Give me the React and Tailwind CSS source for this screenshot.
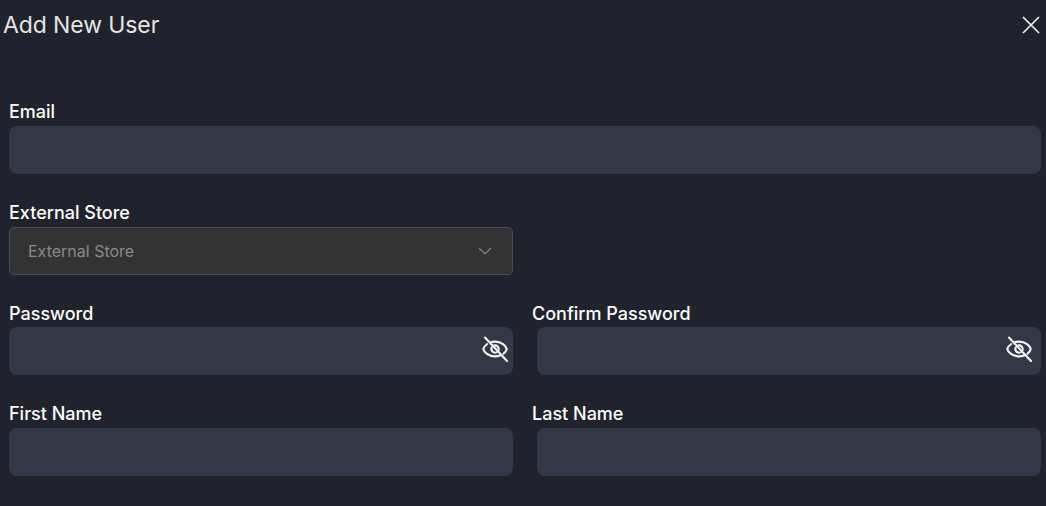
import React from 'react';

const EyeOff = () => (
  <svg width="28" height="28" viewBox="0 0 28 28" fill="none" stroke="#f5f5f5" strokeWidth="2.100" strokeLinecap="round" strokeLinejoin="round">
    <path d="M6.200 9C4 10.600 2.600 12.600 2.300 14c.6 3.200 5.300 7.400 11.700 7.400 2 0 3.800-.4 5.400-1.100" />
    <path d="M9.600 7.300C11 6.800 12.400 6.600 14 6.600c6.400 0 11.100 4.200 11.700 7.400-.3 1.500-1.400 3.200-3.200 4.800" />
    <path d="M10.700 12.500a3.700 3.700 0 0 0 4.800 4.900" />
    <path d="M13.400 10.400a3.700 3.700 0 0 1 4.300 4.300" />
    <path d="M4 2.500 26 26" />
  </svg>
);

const Field = ({ label, labelClass = 'leading-[26px]', children }) => (
  <div className="flex flex-col min-w-0">
    <label className={`h-6 text-[18px] font-medium text-white mb-[3px] whitespace-nowrap ${labelClass}`}>{label}</label>
    {children}
  </div>
);

const TextInput = ({ eyeClass }) => (
  <div className="relative h-12">
    <input className="w-full h-12 rounded-lg bg-[#323846] outline-none px-5 text-white" />
    {eyeClass && (
      <span className={`absolute top-2 flex ${eyeClass}`}>
        <EyeOff />
      </span>
    )}
  </div>
);

export default function App() {
  return (
    <div className="w-[1046px] h-[506px] overflow-hidden bg-[#20232b] font-['Inter',sans-serif]">
      <header className="h-[50px] flex items-center justify-between pl-[3px] pr-[5px]">
        <h2 className="text-[23px] text-[#e6e6e6] leading-[50px] tracking-[-0.1px]">Add New User</h2>
        <button className="flex">
          <svg width="20" height="20" viewBox="0 0 20 20" fill="none" stroke="#f2f2f2" strokeWidth="1.700">
            <path d="M2 2l16 16M18 2 2 18" />
          </svg>
        </button>
      </header>
      <form className="mt-[49px] ml-[9px] w-[1032px] grid grid-cols-2 gap-x-6 gap-y-[25.5px]">
        <div className="col-span-2">
          <Field label="Email"><TextInput /></Field>
        </div>
        <Field label="External Store">
          <div className="h-12 rounded-[5px] border border-[#4b4c4e] bg-[#333333] flex items-center justify-between pl-[18px] pr-5">
            <span className="text-[16px] text-[#8a8a8a]">External Store</span>
            <svg width="14" height="8" viewBox="0 0 14 8" fill="none" stroke="#8a8a8a" strokeWidth="1.100">
              <path d="M1 1l6 6 6-6" />
            </svg>
          </div>
        </Field>
        <div />
        <Field label="Password" labelClass="leading-[28px]"><TextInput eyeClass="right-[4px]" /></Field>
        <Field label="Confirm Password" labelClass="leading-[28px] -ml-[5px]"><TextInput eyeClass="right-2" /></Field>
        <Field label="First Name"><TextInput /></Field>
        <Field label="Last Name" labelClass="leading-[26px] -ml-[5px]"><TextInput /></Field>
      </form>
    </div>
  );
}
